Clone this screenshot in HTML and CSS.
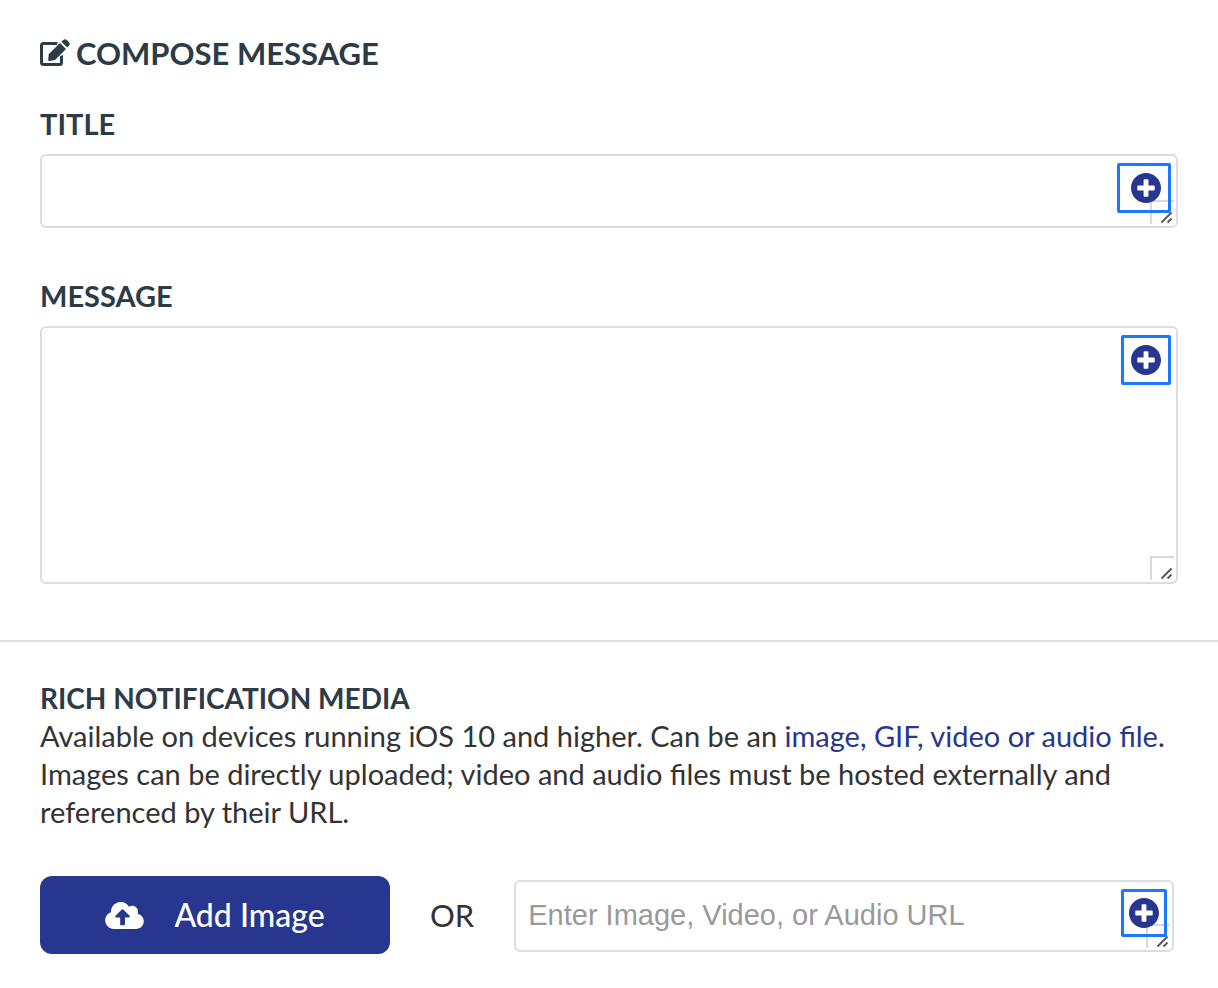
FILE: index.html
```html
<!DOCTYPE html>
<html lang="en">
<head>
<meta charset="utf-8">
<title>Compose Message</title>
<link rel="stylesheet" href="styles.css">
</head>
<body>
<svg class="sprite" aria-hidden="true">
  <symbol id="plus" viewBox="8 8 496 496"><path d="M256 8C119 8 8 119 8 256s111 248 248 248 248-111 248-248S393 8 256 8zm144 276c0 6.600-5.400 12-12 12h-92v92c0 6.600-5.400 12-12 12h-56c-6.600 0-12-5.400-12-12v-92h-92c-6.600 0-12-5.400-12-12v-56c0-6.600 5.400-12 12-12h92v-92c0-6.600 5.400-12 12-12h56c6.600 0 12 5.400 12 12v92h92c6.600 0 12 5.400 12 12v56z"/></symbol>
  <symbol id="grip" viewBox="0 0 24 24"><path d="M1 24V1H24" fill="none" stroke="#d9d9d9" stroke-width="2"/><path d="M11.500 22.500L21.500 12.500M17.500 22.500L21.500 18.500" fill="none" stroke="#555" stroke-width="1.800"/></symbol>
</svg>
<form>
  <section class="compose">
    <h1 class="heading">
      <svg class="edit-icon" viewBox="0 0 30 28" aria-hidden="true">
        <path d="M17.500 4.500H3.500Q1.500 4.500 1.500 6.500V23.500Q1.500 25.500 3.500 25.500H19.500Q21.500 25.500 21.500 23.500V16.500" fill="none" stroke="currentColor" stroke-width="3"/>
        <path d="M19.200 3.200L26.800 10.800L15.500 21.600L8.200 22.600L8.200 14.500Z" fill="#fff"/>
        <path d="M20 4L26 10L15 20.900L9.400 21.900Q8 22.100 8.200 20.700L8.700 15.300Z" fill="currentColor"/>
        <path d="M21.400 2.800L23.300 1Q25.200-.500 27 1.300L28.800 3.100Q30.400 4.900 28.900 6.700L27.200 8.600Z" fill="currentColor"/>
      </svg>
      Compose Message
    </h1>
    <label class="label" for="title">Title</label>
    <div class="field field-title">
      <textarea class="input" id="title" rows="1"></textarea>
      <svg class="grip" aria-hidden="true"><use href="#grip"/></svg>
      <button class="add add-wide" type="button" aria-label="Add to title"><svg class="plus"><use href="#plus"/></svg></button>
    </div>
    <label class="label" for="message">Message</label>
    <div class="field field-message">
      <textarea class="input" id="message"></textarea>
      <svg class="grip" aria-hidden="true"><use href="#grip"/></svg>
      <button class="add" type="button" aria-label="Add to message"><svg class="plus"><use href="#plus"/></svg></button>
    </div>
  </section>
  <section class="media">
    <h2 class="subheading">Rich Notification Media</h2>
    <p class="help">Available on devices running iOS 10 and higher. Can be an <a class="link" href="#">image, GIF, video or audio file</a>. Images can be directly uploaded; video and audio files must be hosted externally and referenced by their URL.</p>
    <div class="upload">
      <button class="primary" type="button">
        <svg class="cloud" viewBox="0 32 640 448" aria-hidden="true"><path d="M537.600 226.600c4.100-10.700 6.400-22.400 6.400-34.600 0-53-43-96-96-96-19.700 0-38.100 6-53.300 16.200C367 64.200 315.300 32 256 32c-88.400 0-160 71.600-160 160 0 2.700.1 5.400.2 8.100C40.200 219.800 0 273.200 0 336c0 79.500 64.500 144 144 144h368c70.700 0 128-57.300 128-128 0-61.900-44-113.600-102.400-125.400zM393.400 288H328v112c0 8.800-7.200 16-16 16h-48c-8.800 0-16-7.200-16-16V288h-65.400c-14.300 0-21.400-17.200-11.300-27.300l105.400-105.400c6.200-6.200 16.400-6.200 22.600 0l105.400 105.400c10.100 10.100 2.900 27.300-11.300 27.300z" fill="currentColor"/></svg>
        Add Image
      </button>
      <span class="or">OR</span>
      <div class="field field-url">
        <textarea class="input" id="url" rows="1" aria-label="Media URL" placeholder="Enter Image, Video, or Audio URL"></textarea>
        <svg class="grip" aria-hidden="true"><use href="#grip"/></svg>
        <button class="add add-url" type="button" aria-label="Add to URL"><svg class="plus"><use href="#plus"/></svg></button>
      </div>
    </div>
  </section>
</form>
</body>
</html>
```
FILE: styles.css
```css
* { box-sizing: border-box; }
body {
  margin: 0;
  background: #fff;
  color: #333;
  font-family: Lato, "Liberation Sans", sans-serif;
  font-size: 29px;
  line-height: 38px;
}
.sprite { position: absolute; width: 0; height: 0; }
.compose { padding: 33px 40px 56px; border-bottom: 2px solid #dddde0; }
.heading {
  display: flex;
  align-items: center;
  gap: 6px;
  margin: 0 0 32px;
  color: #2d3b47;
  font-size: 31px;
  line-height: 40px;
  font-weight: 700;
  text-transform: uppercase;
}
.edit-icon { width: 30px; height: 28px; }
.label,
.subheading {
  display: block;
  margin: 0;
  color: #2d3b47;
  font-size: 29px;
  line-height: 38px;
  font-weight: 700;
  text-transform: uppercase;
}
.subheading { font-size: 28px; }
.field { position: relative; margin-top: 11px; }
.field-title { height: 74px; margin-bottom: 49px; }
.field-message { height: 258px; }
.field-url { flex: 1; height: 72px; margin: 2px 0 0; }
.input {
  display: block;
  width: 100%;
  height: 100%;
  padding: 14px 60px 14px 12px;
  border: 2px solid #dddde0;
  border-radius: 6px;
  background: #fff;
  color: #333;
  font-family: "Liberation Sans", Arial, sans-serif;
  font-size: 29px;
  line-height: 38px;
  resize: none;
  overflow: hidden;
}
.input::placeholder { color: #999; opacity: 1; }
.grip { position: absolute; right: 4px; bottom: 4px; width: 24px; height: 24px; }
.add {
  position: absolute;
  top: 9px;
  right: 7px;
  display: flex;
  align-items: center;
  justify-content: center;
  width: 50px;
  height: 50px;
  padding: 0;
  border: 3px solid #1a78ff;
  border-radius: 2px;
  background: transparent;
  color: #27368f;
}
.add-wide { width: 54px; padding-left: 4px; }
.add-url { width: 46px; height: 48px; }
.plus { width: 30px; height: 30px; fill: currentColor; }
.media { padding: 37px 44px 34px 40px; }
.help { margin: 0 0 45px; }
.link { color: #27368f; text-decoration: none; }
.upload { display: flex; align-items: center; }
.primary {
  display: flex;
  align-items: center;
  justify-content: center;
  gap: 30px;
  width: 350px;
  height: 78px;
  padding: 0;
  border: 0;
  border-radius: 12px;
  background: #27368f;
  color: #fff;
  font: 500 32px/38px Lato, "Liberation Sans", sans-serif;
}
.cloud { width: 39px; height: 27px; }
.or { margin: 0 40px; font-size: 31px; }
```
